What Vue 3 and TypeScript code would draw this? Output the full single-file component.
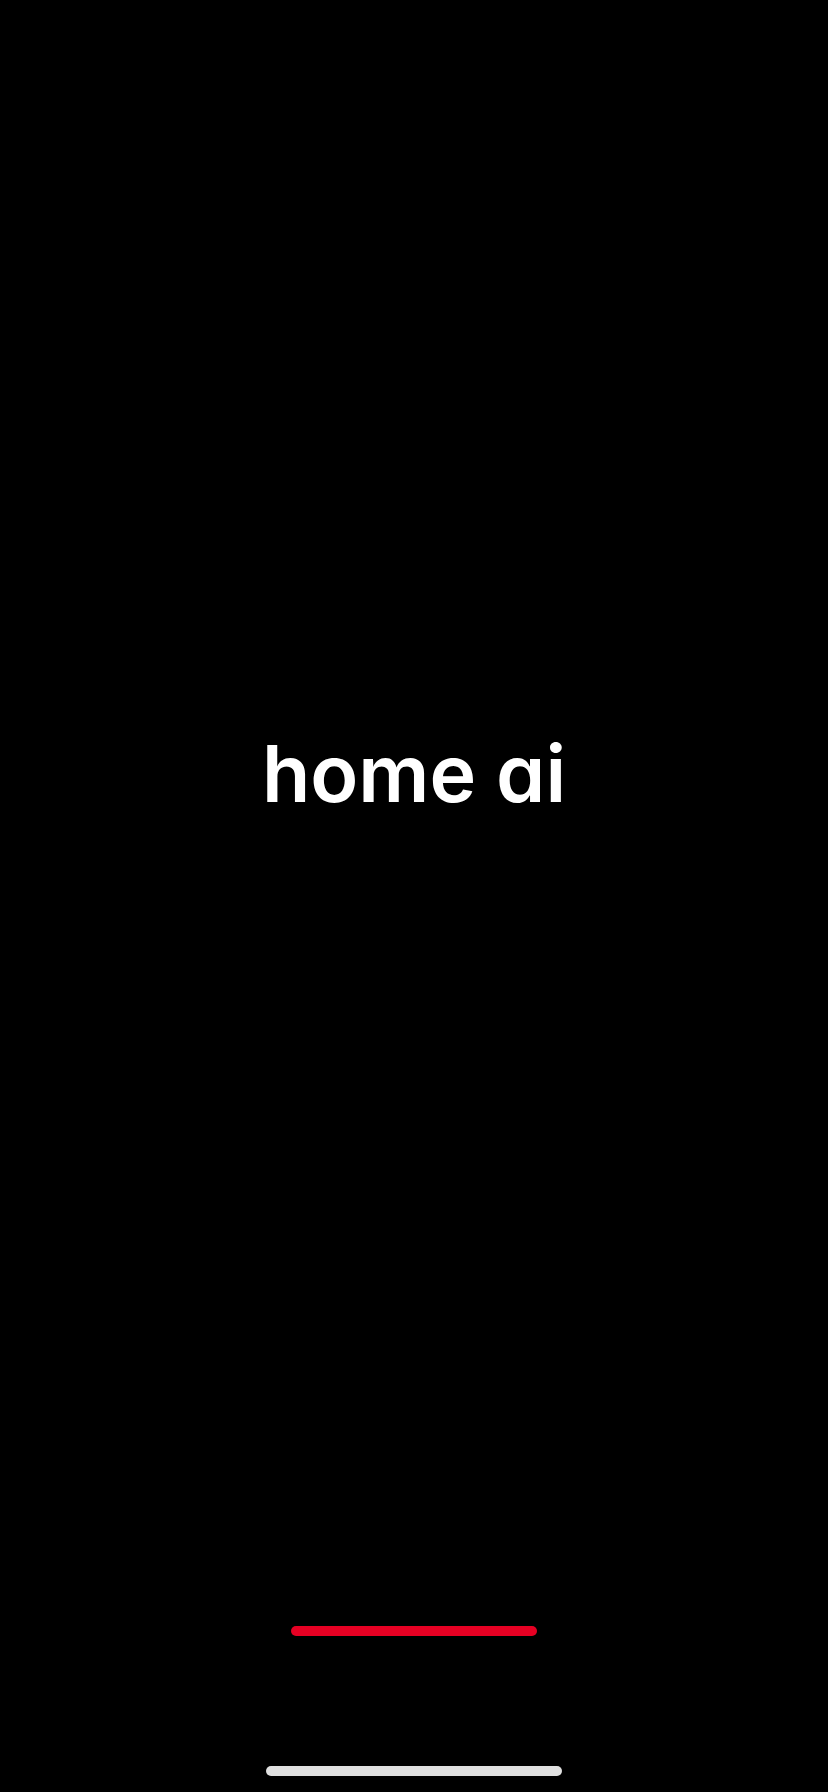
<script setup lang="ts">
const title: string = 'home ai'
</script>

<template>
  <main class="splash">
    <h1 class="logo">{{ title }}</h1>
    <div class="progress"></div>
    <div class="home-indicator"></div>
  </main>
</template>

<style>
html, body { margin: 0; background: #000; }
</style>

<style scoped>
.splash {
  width: 828px;
  height: 1792px;
  background: #000;
  display: flex;
  flex-direction: column;
  align-items: center;
  box-sizing: border-box;
  padding-top: 728px;
}
.logo {
  margin: 0;
  height: 90px;
  line-height: 90px;
  font-family: Inter, "Noto Sans", sans-serif;
  font-feature-settings: "cv11" 1;
  font-weight: 600;
  font-size: 79px;
  letter-spacing: 0;
  color: #fff;
  white-space: nowrap;
}
.progress {
  width: 246px;
  height: 10px;
  margin-top: 808px;
  border-radius: 5px;
  background: #e60023;
}
.home-indicator {
  width: 296px;
  height: 10px;
  margin-top: 130px;
  border-radius: 5px;
  background: #e0e0e0;
}
</style>
